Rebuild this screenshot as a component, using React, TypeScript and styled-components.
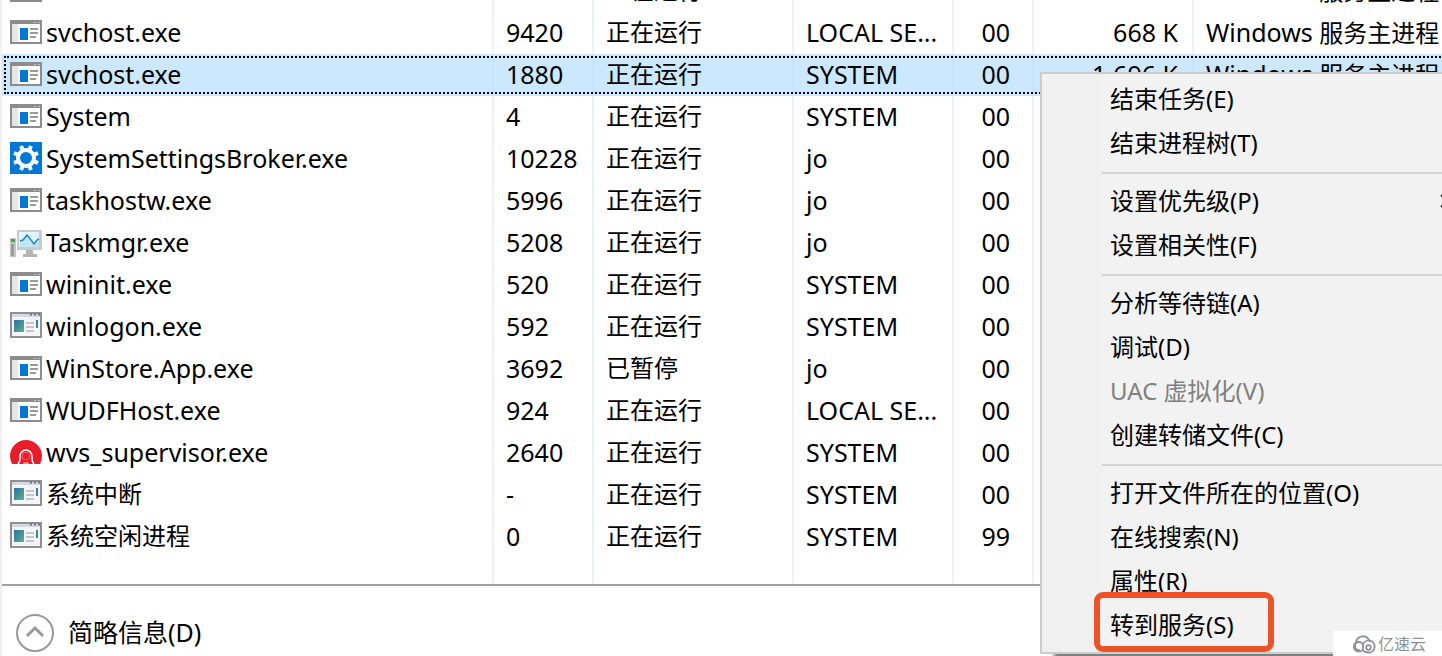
import React from "react";
import styled, { createGlobalStyle, css } from "styled-components";

const LATIN = `"Noto Sans", "Open Sans", "Noto Sans CJK SC", sans-serif`;

const GlobalStyle = createGlobalStyle`
  * { box-sizing: border-box; }
  body {
    margin: 0;
    background: #fff;
    color: #000;
    font-family: ${LATIN};
    font-size: 24px;
  }
`;

const Window = styled.main`
  position: relative;
  overflow: hidden;
  min-height: 100vh;
  border-left: 2px solid #f0f0f0;
`;

const ListView = styled.section`
  overflow: hidden;
  border-bottom: 2px solid #a0a0a0;
`;

/* The list is scrolled so that only the foot of its first row shows. */
const ProcessTable = styled.table`
  width: calc(100% + 60px);
  margin-top: -30px;
  table-layout: fixed;
  border-collapse: separate;
  border-spacing: 0;
`;

const Column = styled.col<{ $width?: number }>`
  ${(p) => p.$width && css`width: ${p.$width}px;`}
`;

const Row = styled.tr<{ $selected?: boolean }>`
  height: 42px;
  ${(p) =>
    p.$selected &&
    css`
      background: #cce8ff;
      outline: 2px dotted #000;
      outline-offset: -4px;
    `}
`;

const FillerRow = styled.tr`
  height: 26px;
`;

const Cell = styled.td<{ $align?: "right"; $end?: number; $han?: boolean }>`
  height: inherit;
  padding: 0 ${(p) => p.$end ?? 0}px 2px 12px;
  border-right: 2px solid rgba(190, 220, 245, 0.35);
  text-align: ${(p) => p.$align ?? "left"};
  font-size: ${(p) => (p.$han ? 24 : 25)}px;
  line-height: 38px;
  white-space: nowrap;
  overflow: hidden;
`;

const NameCell = styled(Cell)`
  padding-left: 8px;
`;

const ProcessName = styled.div`
  display: flex;
  align-items: center;
  gap: 4px;
  height: 40px;
`;

const Han = styled.span`
  font-size: 24px;
  line-height: 24px;
`;

const IconBox = styled.svg`
  flex: none;
  width: 32px;
  height: 32px;
`;

const Footer = styled.footer`
  padding: 27px 14px 3px;
`;

const DetailsToggle = styled.button`
  display: flex;
  align-items: center;
  gap: 14px;
  height: 40px;
  padding: 0;
  border: 0;
  background: none;
  font: inherit;
  font-size: 25px;
  line-height: 38px;
  color: #000;
`;

const ToggleLabel = styled.span`
  padding-bottom: 2px;
`;

const ToggleIcon = styled.svg`
  width: 38px;
  height: 38px;
`;

const ContextMenu = styled.div`
  position: absolute;
  left: 1038px;
  top: 72px;
  width: 460px;
  padding: 4px 0;
  border: 2px solid #ccc;
  background: linear-gradient(to right, #f0f0f0 60px, #f2f2f2 60px);
  box-shadow: 12px 8px 4px -2px rgba(0, 0, 0, 0.5);
`;

const MenuItem = styled.button`
  position: relative;
  display: flex;
  align-items: center;
  width: 100%;
  height: 44px;
  padding: 0 50px 2px 68px;
  border: 0;
  background: none;
  font: inherit;
  line-height: 40px;
  color: #000;
  text-align: left;
  white-space: nowrap;

  &:disabled {
    color: #808080;
  }
`;

const Separator = styled.hr`
  height: 2px;
  margin: 6px 0 6px 60px;
  border: 0;
  background: #d4d4d4;
`;

const SubmenuArrow = styled.svg`
  width: 8px;
  height: 14px;
  margin-left: auto;
`;

const Highlight = styled.span`
  position: absolute;
  left: 52px;
  top: -12px;
  bottom: -4px;
  width: 180px;
  border: 6px solid #ee5328;
  border-radius: 9px;
  pointer-events: none;
`;

const Watermark = styled.div`
  position: absolute;
  right: 0;
  bottom: 0;
  display: flex;
  align-items: center;
  gap: 2px;
  height: 25px;
  padding: 0 16px 0 18px;
  background: #fff;
  color: #8d9299;
  font-size: 16px;
  line-height: 24px;
`;

const CloudLogo = styled.svg`
  width: 25px;
  height: 20px;
`;

type IconKind = "app" | "gear" | "monitor" | "window" | "arch";

function ProcessIcon({ kind }: { kind: IconKind }) {
  switch (kind) {
    case "gear":
      return (
        <IconBox viewBox="0 0 32 32" aria-hidden="true">
          <rect width="32" height="32" fill="#0078d7" />
          <circle cx="16" cy="16" r="8" fill="none" stroke="#fff" strokeWidth="4" />
          {[0, 1, 2, 3, 4, 5, 6, 7].map((i) => (
            <rect
              key={i}
              x="14"
              y="3"
              width="4"
              height="4"
              fill="#fff"
              transform={`rotate(${22.5 + i * 45} 16 16)`}
            />
          ))}
        </IconBox>
      );
    case "monitor":
      return (
        <IconBox viewBox="0 0 32 32" aria-hidden="true">
          <rect x="0" y="12" width="6" height="19" fill="#c4c6c6" />
          <rect x="1" y="13" width="4" height="3" fill="#3fae3a" />
          <rect x="1" y="18" width="3" height="12" fill="#9a9e9e" />
          <rect x="7" y="4" width="25" height="20" fill="#c9cbcb" />
          <rect x="9" y="6" width="20" height="15" fill="#e0f5fd" />
          <path d="M10 15l3-2 4-4 4 4 3 4 3-4 2-1v9H10z" fill="#bfe6f7" />
          <path d="M10 15l3-1 4-5 4 5 3 4 3-4 2-1" fill="none" stroke="#2f86c0" strokeWidth="1.500" />
          <path d="M16 24h7v4h4v3H13v-3h3z" fill="#b3b5b5" />
        </IconBox>
      );
    case "window":
      return (
        <IconBox viewBox="0 0 32 32" aria-hidden="true">
          <defs>
            <linearGradient id="pane" x1="0" y1="0" x2="1" y2="1">
              <stop offset="0" stopColor="#2f6fa8" />
              <stop offset="1" stopColor="#58b583" />
            </linearGradient>
          </defs>
          <rect x="1" y="3" width="30" height="24" fill="#f4f5f7" stroke="#8d9196" strokeWidth="2" />
          <rect x="2" y="4" width="28" height="3" fill="#d5dae2" />
          <path d="M20 4.500h2M24 4.500h2M28 4.500h2" stroke="#6d7278" strokeWidth="2" />
          <rect x="4" y="10" width="10" height="12" fill="url(#pane)" />
          <path d="M16 13h8M16 17h8M16 21h8" stroke="#c3c5c8" strokeWidth="2" />
          <rect x="26" y="10" width="2" height="8" fill="#3f8298" />
        </IconBox>
      );
    case "arch":
      return (
        <IconBox viewBox="0 0 32 32" aria-hidden="true">
          <path d="M0 20a16 16 0 0 1 32 0q0 4-2 8H2q-2-4-2-8z" fill="#e81c2a" />
          <path
            d="M8 28q2-2 2-5v-3a6 6 0 0 1 12 0v3q0 3 2 5"
            fill="none"
            stroke="#fff"
            strokeWidth="1.500"
          />
          <path d="M13 28q0-2 3-2t3 2z" fill="#fff" opacity="0.500" />
          <circle cx="16" cy="20" r="4" fill="none" stroke="#fff" opacity="0.300" />
        </IconBox>
      );
    default:
      return (
        <IconBox viewBox="0 0 32 32" aria-hidden="true">
          <rect x="1" y="5" width="30" height="22" fill="#fff" stroke="#8c8c8c" strokeWidth="2" />
          <rect x="0" y="4" width="32" height="4" fill="#8c8c8c" />
          <path d="M24 6.500h2M28 6.500h2" stroke="#c4c4c4" />
          <rect x="2" y="8" width="6" height="18" fill="#e6e6e6" />
          <rect x="10" y="12" width="8" height="12" fill="#0078d7" />
          <path d="M20 13h8M20 17h8M20 21h6" stroke="#9a9a9a" strokeWidth="2" />
        </IconBox>
      );
  }
}

interface Process {
  name?: string;
  pid?: string;
  user?: string;
  icon?: IconKind;
  status?: string;
  cpu?: string;
  memory?: string;
  service?: boolean;
  selected?: boolean;
}

const processes: Process[] = [
  { cpu: "", service: true },
  { name: "svchost.exe", pid: "9420", user: "LOCAL SE...", memory: "668 K", service: true },
  { name: "svchost.exe", pid: "1880", user: "SYSTEM", memory: "1,696 K", service: true, selected: true },
  { name: "System", pid: "4", user: "SYSTEM" },
  { name: "SystemSettingsBroker.exe", pid: "10228", user: "jo", icon: "gear" },
  { name: "taskhostw.exe", pid: "5996", user: "jo" },
  { name: "Taskmgr.exe", pid: "5208", user: "jo", icon: "monitor" },
  { name: "wininit.exe", pid: "520", user: "SYSTEM" },
  { name: "winlogon.exe", pid: "592", user: "SYSTEM", icon: "window" },
  { name: "WinStore.App.exe", pid: "3692", user: "jo", status: "已暂停" },
  { name: "WUDFHost.exe", pid: "924", user: "LOCAL SE..." },
  { name: "wvs_supervisor.exe", pid: "2640", user: "SYSTEM", icon: "arch" },
  { name: "系统中断", pid: "-", user: "SYSTEM", icon: "window" },
  { name: "系统空闲进程", pid: "0", user: "SYSTEM", icon: "window", cpu: "99" },
];

interface MenuEntry {
  label: string;
  disabled?: boolean;
  submenu?: boolean;
  highlighted?: boolean;
}

const menuGroups: MenuEntry[][] = [
  [{ label: "结束任务(E)" }, { label: "结束进程树(T)" }],
  [{ label: "设置优先级(P)", submenu: true }, { label: "设置相关性(F)" }],
  [
    { label: "分析等待链(A)" },
    { label: "调试(D)" },
    { label: "UAC 虚拟化(V)", disabled: true },
    { label: "创建转储文件(C)" },
  ],
  [
    { label: "打开文件所在的位置(O)" },
    { label: "在线搜索(N)" },
    { label: "属性(R)" },
    { label: "转到服务(S)", highlighted: true },
  ],
];

const columnWidths = [492, 100, 200, 160, 80, 160];

export default function App() {
  return (
    <Window>
      <GlobalStyle />
      <ListView>
        <ProcessTable>
          <colgroup>
            {columnWidths.map((w, i) => (
              <Column key={i} $width={w} />
            ))}
            <Column />
          </colgroup>
          <tbody>
            {processes.map((p, i) => (
              <Row key={i} $selected={p.selected}>
                <NameCell $han={/[\u4e00-\u9fff]/.test(p.name ?? "")}>
                  <ProcessName>
                    <ProcessIcon kind={p.icon ?? "app"} />
                    {p.name}
                  </ProcessName>
                </NameCell>
                <Cell>{p.pid}</Cell>
                <Cell $han>{p.status ?? "正在运行"}</Cell>
                <Cell>{p.user}</Cell>
                <Cell $align="right" $end={22}>{p.cpu ?? "00"}</Cell>
                <Cell $align="right" $end={14}>{p.memory}</Cell>
                <Cell>
                  {p.service && (
                    <>
                      Windows <Han>服务主进程</Han>
                    </>
                  )}
                </Cell>
              </Row>
            ))}
            <FillerRow aria-hidden="true">
              {[...columnWidths, 0].map((_, i) => (
                <Cell key={i} />
              ))}
            </FillerRow>
          </tbody>
        </ProcessTable>
      </ListView>
      <Footer>
        <DetailsToggle type="button">
          <ToggleIcon viewBox="0 0 38 38" aria-hidden="true">
            <circle cx="19" cy="19" r="18" fill="none" stroke="#999" strokeWidth="2" />
            <path d="M11 22l8-8 8 8" fill="none" stroke="#999" strokeWidth="3" />
          </ToggleIcon>
          <ToggleLabel>简略信息(D)</ToggleLabel>
        </DetailsToggle>
      </Footer>
      <ContextMenu role="menu">
        {menuGroups.map((group, i) => (
          <React.Fragment key={i}>
            {i > 0 && <Separator />}
            {group.map((item) => (
              <MenuItem key={item.label} type="button" role="menuitem" disabled={item.disabled}>
                {item.label}
                {item.submenu && (
                  <SubmenuArrow viewBox="0 0 8 14" aria-hidden="true">
                    <path d="M1 1l6 6-6 6" fill="none" stroke="#333" strokeWidth="2" />
                  </SubmenuArrow>
                )}
                {item.highlighted && <Highlight />}
              </MenuItem>
            ))}
          </React.Fragment>
        ))}
      </ContextMenu>
      <Watermark>
        <CloudLogo viewBox="0 0 25 20" aria-hidden="true">
          <g fill="none" stroke="#8d9299" strokeWidth="1.800" strokeLinecap="round">
            <path d="M5 8.500a7 7 0 0 1 13.500-1.500" />
            <path d="M5 8.500a5 5 0 1 0 6.500 7.500q1-2 .5-4a4 4 0 1 0-4 4" />
            <path d="M11.500 16q2 2.500 6 2.500a6 6 0 1 0-5.500-8" />
            <circle cx="17.500" cy="13.500" r="2.300" />
          </g>
        </CloudLogo>
        亿速云
      </Watermark>
    </Window>
  );
}
